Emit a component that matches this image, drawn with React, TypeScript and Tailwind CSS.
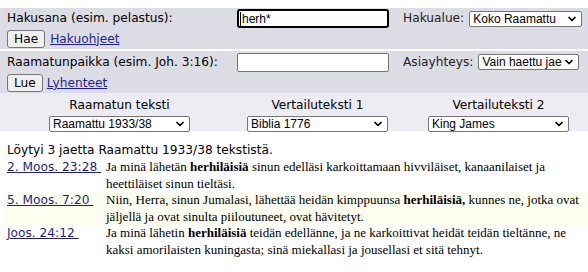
import { ChevronDown } from 'lucide-react';

const sans = "font-['DejaVu_Sans',Verdana,sans-serif]";
const arial = "font-['Liberation_Sans',Arial,sans-serif]";

const results = [
  {
    ref: '2. Moos. 23:28',
    before: 'Ja minä lähetän ',
    hit: 'herhiläisiä',
    after: ' sinun edelläsi karkoittamaan hivviläiset, kanaanilaiset ja heettiläiset sinun tieltäsi.',
  },
  {
    ref: '5. Moos. 7:20',
    before: 'Niin, Herra, sinun Jumalasi, lähettää heidän kimppuunsa ',
    hit: 'herhiläisiä,',
    after: ' kunnes ne, jotka ovat jäljellä ja ovat sinulta piiloutuneet, ovat hävitetyt.',
  },
  {
    ref: 'Joos. 24:12',
    before: 'Ja minä lähetin ',
    hit: 'herhiläisiä',
    after: ' teidän edellänne, ja ne karkoittivat heidät teidän tieltänne, ne kaksi amorilaisten kuningasta; sinä miekallasi ja jousellasi et sitä tehnyt.',
  },
];

function Select({ value, className }: { value: string; className: string }) {
  return (
    <div
      className={`${arial} h-[16px] flex items-center justify-between border border-[#767676] rounded-[2px] bg-white text-[12px] leading-[14px] text-black pl-[3px] pr-[3px] ${className}`}
    >
      <span className="whitespace-nowrap overflow-hidden">{value}</span>
      <ChevronDown size={12} strokeWidth={3.5} className="shrink-0 text-black" />
    </div>
  );
}

function NativeButton({ label }: { label: string }) {
  return (
    <button
      type="button"
      className={`${sans} h-[18px] px-[6px] border border-[#767676] rounded-[3px] bg-[#efefef] text-[12.2px] leading-[14px] text-black`}
    >
      {label}
    </button>
  );
}

export default function App() {
  return (
    <div className={`${sans} w-[588px] h-[272px] bg-white text-[12.2px] text-black overflow-hidden pt-[8px]`}>
      {/* search word */}
      <div className="bg-[#dcdce5] h-[41px] pl-[7px]">
        <div className="flex items-center h-[21px]">
          <span className="w-[230px]">Hakusana (esim. pelastus):</span>
          <div className={`${arial} w-[152px] h-[19px] border-2 border-black rounded-[3px] bg-white flex items-center pl-[1px] text-[12px]`}>
            <span className="w-px h-[14px] bg-black mr-px" />
            herh*
          </div>
          <span className="ml-[14px] text-[#222]">Hakualue:</span>
          <Select value="Koko Raamattu" className="ml-[5px] w-[113px]" />
        </div>
        <div className="flex items-center h-[20px] gap-[5px]">
          <NativeButton label="Hae" />
          <a href="#" className="text-[#1f1f9a] underline">Hakuohjeet</a>
        </div>
      </div>

      <div className="h-[2px]" />

      {/* bible reference */}
      <div className="bg-[#dcdce5] h-[42px] pl-[7px]">
        <div className="flex items-center h-[22px]">
          <span className="w-[230px]">Raamatunpaikka (esim. Joh. 3:16):</span>
          <div className="w-[152px] h-[19px] border border-[#767676] rounded-[2px] bg-white" />
          <span className="ml-[14px] text-[#222]">Asiayhteys:</span>
          <Select value="Vain haettu jae" className="ml-[5px] w-[101px]" />
        </div>
        <div className="flex items-center h-[20px] gap-[4px]">
          <NativeButton label="Lue" />
          <a href="#" className="text-[#1f1f9a] underline">Lyhenteet</a>
        </div>
      </div>

      {/* translations */}
      <div className="bg-[#ececf2] h-[38px] flex pt-[4px]">
        <div className="ml-[49px] w-[141px] flex flex-col items-center">
          <span className="leading-[16px] whitespace-nowrap">Raamatun teksti</span>
          <Select value="Raamattu 1933/38" className="mt-[3px] w-[141px]" />
        </div>
        <div className="ml-[57px] w-[141px] flex flex-col items-center">
          <span className="leading-[16px] whitespace-nowrap">Vertailuteksti 1</span>
          <Select value="Biblia 1776" className="mt-[3px] w-[141px]" />
        </div>
        <div className="ml-[40px] w-[141px] flex flex-col items-center">
          <span className="leading-[16px] whitespace-nowrap">Vertailuteksti 2</span>
          <Select value="King James" className="mt-[3px] w-[141px]" />
        </div>
      </div>

      {/* results */}
      <div className="pl-[7px] pt-[11px]">
        <p className="leading-[16px]">Löytyi 3 jaetta Raamattu 1933/38 tekstistä.</p>
        <div className="mt-[1px] -ml-[2px]">
          {results.map((r, i) => (
            <div
              key={r.ref}
              className={`flex pl-[2px] ${i === 1 ? 'bg-[#fdfdf0]' : ''}`}
            >
              <a href="#" className="w-[99px] shrink-0 text-[#1f1f80] underline leading-[16.5px] whitespace-pre">
                {r.ref + ' '}
              </a>
              <p className="font-['Liberation_Serif','Times_New_Roman',serif] text-[13px] leading-[16.5px] pr-[4px]">
                {r.before}
                <b>{r.hit}</b>
                {r.after}
              </p>
            </div>
          ))}
        </div>
      </div>
    </div>
  );
}
